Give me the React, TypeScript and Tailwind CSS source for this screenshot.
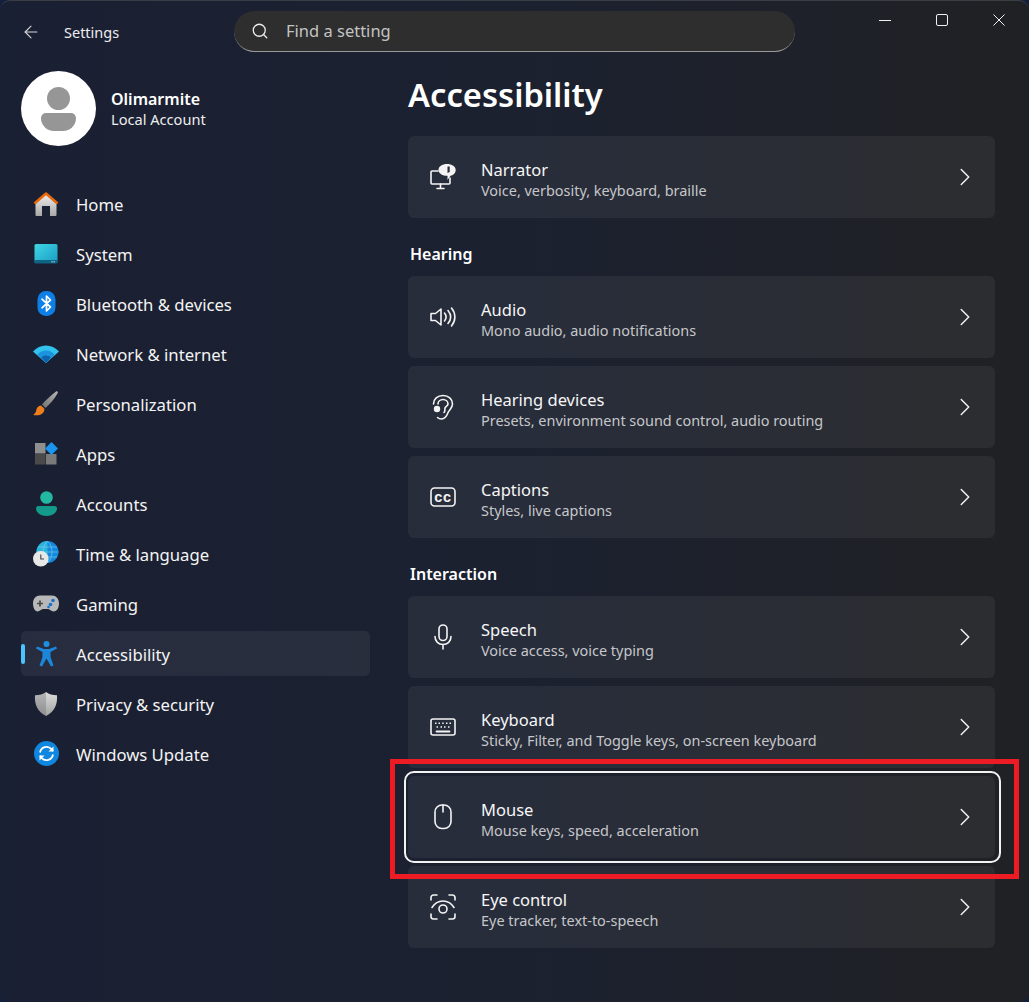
import type { ReactNode } from 'react';
import { ArrowLeft, ChevronRight, Search } from 'lucide-react';

const HomeIcon = () => (
  <svg width="26" height="26" viewBox="0 0 26 26">
    <defs>
      <linearGradient id="homeBody" x1="0" y1="0" x2="0" y2="1">
        <stop offset="0" stopColor="#ececec" />
        <stop offset="1" stopColor="#a8a8a8" />
      </linearGradient>
    </defs>
    <path d="M2.500 11.500 13 3.500l10.500 8V24a1 1 0 0 1-1 1H17V15h-8v10H3.500a1 1 0 0 1-1-1z" fill="url(#homeBody)" />
    <path d="M1.500 12.500 13 2.500l11.500 10" fill="none" stroke="#e8680c" strokeWidth="2.600" strokeLinejoin="round" />
  </svg>
);

const SystemIcon = () => (
  <svg width="24" height="20" viewBox="0 0 24 20">
    <defs>
      <linearGradient id="sysScreen" x1="0" y1="0" x2="1" y2="1">
        <stop offset="0" stopColor="#3fd6e4" />
        <stop offset="1" stopColor="#1a9cc4" />
      </linearGradient>
    </defs>
    <rect x="0.500" y="0" width="23" height="19" rx="1.500" fill="url(#sysScreen)" />
    <path d="M.5 16h23v2A1.500 1.500 0 0 1 22 19.500H2A1.500 1.500 0 0 1 .5 18z" fill="#0f6383" />
    <rect x="17.500" y="17.200" width="1.200" height="1.200" fill="#b9e6f2" />
    <rect x="19.600" y="17.200" width="1.200" height="1.200" fill="#b9e6f2" />
  </svg>
);

const BluetoothIcon = () => (
  <svg width="19" height="25" viewBox="0 0 19 25">
    <rect x="0.500" y="0" width="18" height="25" rx="8.500" fill="#0f7fe8" />
    <path d="M5 8.200 13.500 16 9.500 20V5l4 4L5 16.800" fill="none" stroke="#fff" strokeWidth="1.700" strokeLinejoin="round" strokeLinecap="round" />
  </svg>
);

const WifiIcon = () => (
  <svg width="26" height="18" viewBox="0 0 26 18">
    <path d="M0 6.500C3.500 2.500 8 .5 13 .5s9.500 2 13 6L13 18z" fill="#31c2ee" />
    <path d="M4.500 9.500C6.800 7 9.700 5.600 13 5.600s6.200 1.400 8.500 3.900L13 18z" fill="#1c93dc" />
    <path d="M8.300 12.500C9.500 11.200 11.100 10.500 13 10.500s3.500.7 4.700 2L13 18z" fill="#0f63ad" />
  </svg>
);

const BrushIcon = () => (
  <svg width="26" height="25" viewBox="0 0 26 25">
    <defs>
      <linearGradient id="brushHandle" x1="0" y1="1" x2="1" y2="0">
        <stop offset="0" stopColor="#6f6f6f" />
        <stop offset="1" stopColor="#b5b5b5" />
      </linearGradient>
    </defs>
    <path d="M23 .5c1.200-.6 2.200.4 1.700 1.600C21.500 8 17.500 12.500 12.500 17L9 13.600C13 9 18 4 23 .5z" fill="url(#brushHandle)" />
    <path d="M8 14.500c-2.800.3-4.200 2-4.700 4.500-.3 2-1.300 3.500-3 5 3.800.7 8 .2 10-2.500 1.300-1.800 1.300-3.500.7-4.300z" fill="#ee7d1c" />
  </svg>
);

const AppsIcon = () => (
  <svg width="23" height="23" viewBox="0 0 23 23">
    <rect x="0" y="1" width="10.500" height="10.500" fill="#8f8f8f" />
    <rect x="0" y="12" width="10.500" height="10.500" fill="#4a4a4a" />
    <rect x="11" y="12" width="10.500" height="10.500" fill="#7a7a7a" />
    <path d="M16.500 0 23 6.500 16.500 13 10 6.500z" fill="#1a94ec" />
  </svg>
);

const AccountsIcon = () => (
  <svg width="21" height="25" viewBox="0 0 21 25">
    <circle cx="10.500" cy="6.500" r="6.300" fill="#22b8a2" />
    <path d="M0 17.500a2.500 2.500 0 0 1 2.500-2.500h16a2.500 2.500 0 0 1 2.500 2.500c0 4.500-5 7.500-10.500 7.500S0 22 0 17.500z" fill="#149a8a" />
  </svg>
);

const TimeIcon = () => (
  <svg width="26" height="26" viewBox="0 0 26 26">
    <circle cx="14.500" cy="11" r="11" fill="#1389dd" />
    <path d="M3.500 11a11 11 0 0 1 11-11v22a11 11 0 0 1-11-11z" fill="#2bb3dc" />
    <path d="M3.500 11h22M14.500 0c-6 6-6 16 0 22M14.500 0c6 6 6 16 0 22M5 6h19M5 16h19" fill="none" stroke="#7fd0f0" strokeWidth=".6" />
    <circle cx="7.800" cy="17.800" r="7.800" fill="#e8e8e8" />
    <path d="M7.800 13.500v4.500h3.200" fill="none" stroke="#404040" strokeWidth="1.100" />
  </svg>
);

const GamingIcon = () => (
  <svg width="26" height="17" viewBox="0 0 26 17">
    <path d="M7 .5h12c4 0 7 3 7 8 0 5-2.500 8-5.500 8-2.500 0-3.500-2.500-5.500-2.500h-5c-2 0-3 2.500-5.500 2.500C2.500 16.500 0 13.500 0 8.500c0-5 3-8 7-8z" fill="#b8b8b8" />
    <path d="M7 5.500v6M4 8.500h6" stroke="#4a4a4a" strokeWidth="1.700" />
    <circle cx="20" cy="5.500" r="1.800" fill="#1473d0" />
    <circle cx="17.500" cy="9.500" r="1.800" fill="#1473d0" />
    <circle cx="15.500" cy="12" r="1.300" fill="#1473d0" />
  </svg>
);

const AccessibilityIcon = () => (
  <svg width="21" height="26" viewBox="0 0 21 26">
    <circle cx="10.500" cy="3" r="3" fill="#1f8fe0" />
    <path d="M1 5.500 8 8h5l7-2.500 1 2-6.500 3.500v5l3 8.500-2.500 1-4.500-8-4.500 8-2.500-1 3-8.500v-5L0 7.500z" fill="#1b86da" />
  </svg>
);

const ShieldIcon = () => (
  <svg width="24" height="24" viewBox="0 0 24 24">
    <defs>
      <linearGradient id="shieldLeft" x1="0" y1="0" x2="0" y2="1">
        <stop offset="0" stopColor="#b4b6b8" />
        <stop offset="1" stopColor="#8e8e8e" />
      </linearGradient>
      <linearGradient id="shieldRight" x1="0" y1="0" x2="0" y2="1">
        <stop offset="0" stopColor="#dcdcdc" />
        <stop offset="1" stopColor="#a4a4a4" />
      </linearGradient>
    </defs>
    <path d="M12 0C9 2.200 5.500 3.200 1 3.200.3 12.200 3.500 19.700 12 24z" fill="url(#shieldLeft)" />
    <path d="M12 0c3 2.200 6.500 3.200 11 3.200.7 9-2.500 16.500-11 20.800z" fill="url(#shieldRight)" />
  </svg>
);

const UpdateIcon = () => (
  <svg width="25" height="25" viewBox="0 0 25 25">
    <circle cx="12.500" cy="12.500" r="12.500" fill="#0f86e0" />
    <path d="M6 11.500a6.600 6.600 0 0 1 11.500-3.300l1.500 2" fill="none" stroke="#fff" strokeWidth="1.800" />
    <path d="M19.500 5.500v5h-5z" fill="#fff" />
    <path d="M19 13.500a6.600 6.600 0 0 1-11.500 3.300l-1.500-2" fill="none" stroke="#fff" strokeWidth="1.800" />
    <path d="M5.500 19.500v-5h5z" fill="#fff" />
  </svg>
);

const stroke = { fill: 'none', stroke: '#f4f4f4', strokeWidth: 1.600, strokeLinecap: 'round', strokeLinejoin: 'round' } as const;

const NarratorIcon = () => (
  <svg width="26" height="26" viewBox="0 0 26 26">
    <path d="M8 7H2a1 1 0 0 0-1 1v11a1 1 0 0 0 1 1h17a1 1 0 0 0 1-1v-5" {...stroke} />
    <path d="M10.500 20v4M7 24.500h7" {...stroke} />
    <path d="M17 0c4.800 0 8.700 2.500 8.700 6s-3 5.500-5.200 5.700L17.500 16v-4.200C12.500 11.800 8.500 9.500 8.500 6S12.200 0 17 0z" fill="#f4f4f4" />
    <path d="M17.500 2.500h2.200V8l-2.200 1z" fill="#262b3a" />
  </svg>
);

const AudioIcon = () => (
  <svg width="26" height="26" viewBox="0 0 26 26">
    <path d="M1 9.500h4.500L11 5v16l-5.500-4.500H1z" {...stroke} />
    <path d="M14.500 9c2 2.500 2 5.500 0 8M18 6.500c3.300 4 3.300 9 0 13M21.500 4c4.500 5.500 4.500 12.500 0 18" {...stroke} />
  </svg>
);

const EarIcon = () => (
  <svg width="26" height="26" viewBox="0 0 26 26">
    <path d="M3.500 10C3.500 5 7.500 1.500 13 1.500s9.500 3.500 9.500 8.500c0 4-3 5.500-4.200 8-1.200 3-2.300 7-6.800 7-1.800 0-3-.5-4-1.500" {...stroke} />
    <path d="M8 10c0-2.500 2.200-4.500 5-4.500s5 2 5 4.500c0 2-2.500 2.500-3 4-.4 1.500.5 3-1 4.500" {...stroke} />
    <circle cx="7" cy="15" r="3.200" fill="#f4f4f4" />
  </svg>
);

const CaptionsIcon = () => (
  <svg width="26" height="20" viewBox="0 0 26 20">
    <rect x="1" y="1" width="24" height="18" rx="3.500" {...stroke} />
    <text x="13" y="14.500" textAnchor="middle" fontFamily="'Liberation Sans', sans-serif" fontSize="14.500" fontWeight="700" letterSpacing="0.800" fill="#f4f4f4">
      cc
    </text>
  </svg>
);

const MicIcon = () => (
  <svg width="26" height="26" viewBox="0 0 26 26">
    <rect x="9" y="1" width="8" height="15.500" rx="4" {...stroke} />
    <path d="M5 12.500c0 5 3.500 8 8 8s8-3 8-8M13 20.500v4.500" {...stroke} />
  </svg>
);

const KeyboardIcon = () => (
  <svg width="26" height="18" viewBox="0 0 26 18">
    <rect x="1" y="1" width="24" height="16" rx="2" {...stroke} />
    <path d="M6.500 13.500h13" {...stroke} strokeWidth={1.800} />
    <path d="M5 5.200h1.500M8.500 5.200H10M12.200 5.200h1.500M16 5.200h1.500M19.500 5.200H21M6.500 9h1.500M10.500 9H12M14 9h1.500M18 9h1.500" {...stroke} strokeWidth={1.600} strokeLinecap="butt" />
  </svg>
);

const MouseIcon = () => (
  <svg width="26" height="26" viewBox="0 0 26 26">
    <rect x="5" y="1" width="16" height="23.500" rx="7" {...stroke} />
    <path d="M13 1v7" {...stroke} />
  </svg>
);

const EyeIcon = () => (
  <svg width="26" height="26" viewBox="0 0 26 26">
    <path d="M1 6V3.500A2.500 2.500 0 0 1 3.500 1H7M19 1h3.500A2.500 2.500 0 0 1 25 3.500V6M25 20v2.500a2.500 2.500 0 0 1-2.500 2.500H19M7 25H3.500A2.500 2.500 0 0 1 1 22.500V20" {...stroke} />
    <path d="M2 13.500C4.500 9.500 8.500 7 13 7s8.500 2.500 11 6.500" {...stroke} />
    <circle cx="13" cy="15" r="4" {...stroke} />
  </svg>
);

const navItems: { label: string; icon: ReactNode }[] = [
  { label: 'Home', icon: <HomeIcon /> },
  { label: 'System', icon: <SystemIcon /> },
  { label: 'Bluetooth & devices', icon: <BluetoothIcon /> },
  { label: 'Network & internet', icon: <WifiIcon /> },
  { label: 'Personalization', icon: <BrushIcon /> },
  { label: 'Apps', icon: <AppsIcon /> },
  { label: 'Accounts', icon: <AccountsIcon /> },
  { label: 'Time & language', icon: <TimeIcon /> },
  { label: 'Gaming', icon: <GamingIcon /> },
  { label: 'Accessibility', icon: <AccessibilityIcon /> },
  { label: 'Privacy & security', icon: <ShieldIcon /> },
  { label: 'Windows Update', icon: <UpdateIcon /> },
];

const SettingCard = ({ icon, title, sub }: { icon: ReactNode; title: string; sub: string }) => (
  <div className="flex h-[82px] items-center rounded-[6px] bg-white/[0.055] pl-[22px] pr-[15px]">
    <div className="flex w-[26px] items-center justify-center">{icon}</div>
    <div className="ml-[25px] flex-1 pt-[5px]">
      <div className="text-[16.500px] leading-[22px] text-[#f6f6f6]">{title}</div>
      <div className="text-[14.450px] leading-[19px] text-[#c6c7ca]">{sub}</div>
    </div>
    <ChevronRight className="h-[30px] w-[30px] text-[#f0f0f0]" strokeWidth={1.200} />
  </div>
);

const SectionLabel = ({ children }: { children: ReactNode }) => (
  <div className="mb-[11px] mt-[25px] pl-[2px] text-[16px] font-semibold leading-[22px] text-white">{children}</div>
);

export default function App() {
  return (
    <div className="relative h-[1002px] w-[1029px] overflow-hidden bg-[#12203c] font-['Noto_Sans','Open_Sans',sans-serif]">
      <div className="flex h-full flex-col rounded-[10px] border-t border-[#3a3d44] bg-gradient-to-r from-[#1a2033] via-[#1c2130] to-[#202124]">
        <header className="flex h-[61px] shrink-0 items-start">
          <div className="flex w-[234px] items-center pt-[20px] pl-[21px]">
            <ArrowLeft className="h-[20px] w-[20px] text-[#d8d8d8]" strokeWidth={1.300} />
            <span className="ml-[23px] text-[14.500px] leading-[22px] text-[#ededed]">Settings</span>
          </div>
          <div className="mt-[10px] flex h-[41px] w-[561px] items-center rounded-full border-b border-[#9a9a9a] bg-[#2e2e2e] pl-[17px] text-[16.500px] text-[#c3c3c3]">
            <Search className="h-[18px] w-[18px] text-[#ededed]" strokeWidth={1.700} />
            <span className="ml-[17px]">Find a setting</span>
          </div>
          <div className="ml-[84px] mt-[13px] flex h-[12px] w-[126px] items-center justify-between">
            <div className="h-[1px] w-[12px] bg-[#f0f0f0]" />
            <div className="h-[12px] w-[12px] rounded-[2px] border border-[#f0f0f0]" />
            <svg width="12" height="12" viewBox="0 0 12 12">
              <path d="M.5.5l11 11M11.500.5l-11 11" stroke="#f0f0f0" strokeWidth="1" />
            </svg>
          </div>
        </header>

        <div className="flex flex-1">
          <aside className="w-[390px] shrink-0 px-[21px] pt-[9px]">
            <div className="flex items-center">
              <div className="flex h-[75px] w-[75px] flex-col items-center justify-center gap-[3px] rounded-full bg-white">
                <div className="h-[23px] w-[23px] rounded-full bg-[#969696]" />
                <div className="h-[18px] w-[35px] rounded-b-[18px] rounded-t-[7px] bg-[#969696]" />
              </div>
              <div className="ml-[15px]">
                <div className="text-[16px] font-semibold leading-[22px] text-white">Olimarmite</div>
                <div className="text-[14.600px] leading-[19px] text-[#ededed]">Local Account</div>
              </div>
            </div>
            <nav className="mt-[35px] flex w-[349px] flex-col gap-[5px]">
              {navItems.map((item) => (
                <div
                  key={item.label}
                  className={`relative flex h-[45px] items-center rounded-[5px] text-[16.700px] text-[#f4f4f4] ${
                    item.label === 'Accessibility' ? 'bg-white/[0.06]' : ''
                  }`}
                >
                  {item.label === 'Accessibility' && (
                    <div className="absolute left-0 top-[13px] h-[20px] w-[4px] rounded-full bg-[#4cc2ff]" />
                  )}
                  <div className="ml-[12px] flex w-[26px] items-center justify-center">{item.icon}</div>
                  <span className="ml-[17px] pt-[2px]">{item.label}</span>
                </div>
              ))}
            </nav>
          </aside>

          <main className="w-[639px] shrink-0 pl-[18px] pr-[34px] pt-[11px]">
            <h1 className="mb-[19px] h-[44px] text-[32.700px] font-semibold leading-[44px] text-white">Accessibility</h1>
            <SettingCard icon={<NarratorIcon />} title="Narrator" sub="Voice, verbosity, keyboard, braille" />
            <SectionLabel>Hearing</SectionLabel>
            <div className="flex flex-col gap-[8px]">
              <SettingCard icon={<AudioIcon />} title="Audio" sub="Mono audio, audio notifications" />
              <SettingCard icon={<EarIcon />} title="Hearing devices" sub="Presets, environment sound control, audio routing" />
              <SettingCard icon={<CaptionsIcon />} title="Captions" sub="Styles, live captions" />
            </div>
            <SectionLabel>Interaction</SectionLabel>
            <div className="flex flex-col gap-[8px]">
              <SettingCard icon={<MicIcon />} title="Speech" sub="Voice access, voice typing" />
              <SettingCard icon={<KeyboardIcon />} title="Keyboard" sub="Sticky, Filter, and Toggle keys, on-screen keyboard" />
              <SettingCard icon={<MouseIcon />} title="Mouse" sub="Mouse keys, speed, acceleration" />
              <SettingCard icon={<EyeIcon />} title="Eye control" sub="Eye tracker, text-to-speech" />
            </div>
          </main>
        </div>
      </div>

      {/* focus ring and the red annotation sit over the Mouse card */}
      <div className="absolute left-[404px] top-[771px] h-[92px] w-[597px] rounded-[10px] border-[2.500px] border-[#f2f2f2]" />
      <div className="absolute left-[390px] top-[759px] h-[120px] w-[629px] border-[5px] border-[#ed1c24]" />
    </div>
  );
}
